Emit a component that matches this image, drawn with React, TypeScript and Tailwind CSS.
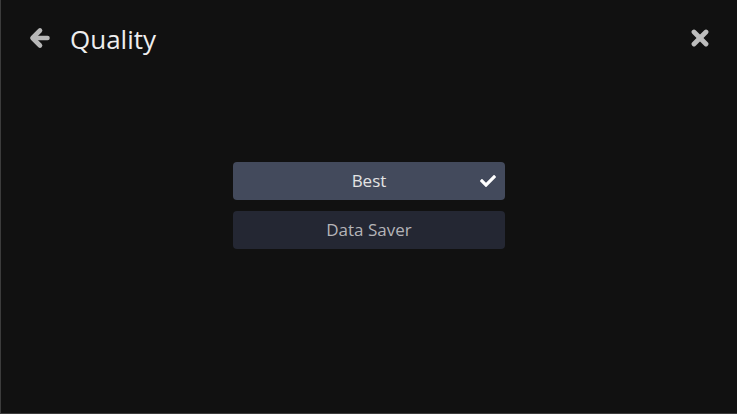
import React from 'react';
import { FaCheck } from 'react-icons/fa';

const options = [
  { label: 'Best', selected: true },
  { label: 'Data Saver', selected: false },
];

const BackIcon = () => (
  <svg width="22" height="22" viewBox="0 0 22 22" className="text-[#b8b8b8] shrink-0">
    <g fill="none" stroke="currentColor" strokeWidth="4.6" strokeLinecap="round" strokeLinejoin="round">
      <polyline points="11,3.5 3.5,11 11,18.5" />
      <line x1="4" y1="11" x2="18.5" y2="11" />
    </g>
  </svg>
);

const CloseIcon = () => (
  <svg width="18" height="18" viewBox="0 0 18 18" className="text-[#bdbdbd] shrink-0">
    <g stroke="currentColor" strokeWidth="4.8" strokeLinecap="round">
      <line x1="3" y1="3" x2="15" y2="15" />
      <line x1="15" y1="3" x2="3" y2="15" />
    </g>
  </svg>
);

export default function App() {
  return (
    <div
      className="w-[737px] h-[414px] bg-[#111111] border-l border-b border-[#3c3c3c] flex flex-col overflow-hidden"
      style={{ fontFamily: '"Open Sans", "Noto Sans", sans-serif' }}
    >
      {/* Header */}
      <div className="flex items-center h-[80px] pl-[28px] pr-[28px]">
        <div className="-mt-[4px]"><BackIcon /></div>
        <h1 className="ml-[19px] text-[26px] text-[#eeeeee] leading-none -mt-[2px]">Quality</h1>
        <div className="ml-auto -mt-[5px]"><CloseIcon /></div>
      </div>

      {/* Options */}
      <div className="flex flex-col items-center gap-[11px] mt-[82px]">
        {options.map((o) => (
          <div
            key={o.label}
            className={
              'relative w-[272px] h-[38px] rounded-[4px] flex items-center justify-center text-[17px] ' +
              (o.selected ? 'bg-[#434a5c] text-[#e4e4e4]' : 'bg-[#242733] text-[#b4b4b8]')
            }
          >
            {o.label}
            {o.selected && (
              <FaCheck className="absolute right-[9px] w-[16px] h-[16px] text-white" />
            )}
          </div>
        ))}
      </div>
    </div>
  );
}
